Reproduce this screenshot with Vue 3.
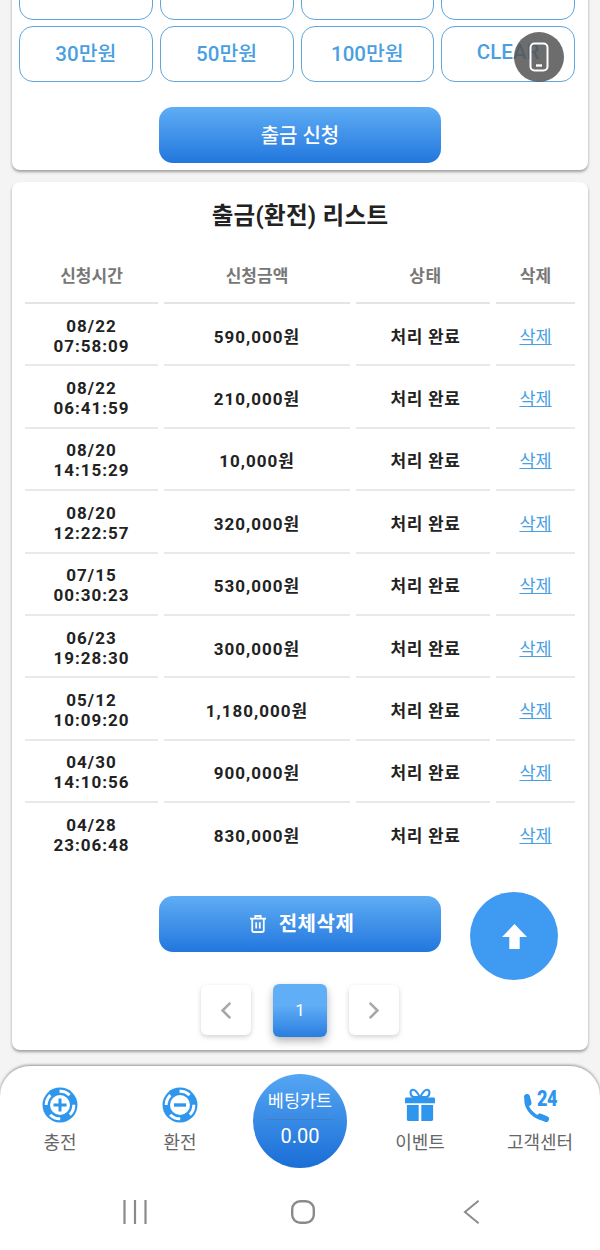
<template>
  <div class="page">
    <!-- amount picker, scrolled partly off the top -->
    <section class="card pick-card">
      <div class="amount-grid">
        <button v-for="a in amounts" :key="a.id" class="amount-btn">{{ a.label }}</button>
      </div>
      <button class="main-btn submit-btn">출금 신청</button>
    </section>

    <!-- withdrawal list -->
    <section class="card list-card">
      <h2 class="list-title">출금(환전) 리스트</h2>
      <table class="list-table">
        <colgroup>
          <col class="col-time" />
          <col class="col-amount" />
          <col class="col-state" />
          <col class="col-del" />
        </colgroup>
        <thead>
          <tr>
            <th>신청시간</th>
            <th>신청금액</th>
            <th class="state-cell">상태</th>
            <th>삭제</th>
          </tr>
        </thead>
        <tbody>
          <tr v-for="row in rows" :key="row.date + row.time">
            <td class="time-cell">{{ row.date }}<br />{{ row.time }}</td>
            <td class="money-cell">{{ row.amount }}원</td>
            <td class="state-cell">처리 완료</td>
            <td><a class="del-link" href="#">삭제</a></td>
          </tr>
        </tbody>
      </table>

      <button class="main-btn clear-btn">
        <svg class="trash" viewBox="0 0 18 20" width="16" height="18" fill="none" stroke="#fff" stroke-width="2">
          <path d="M0 4h18M6 4V1h6v3M2.500 4v13q0 2 2 2h9q2 0 2-2V4M7 8v7M11 8v7" />
        </svg>
        전체삭제
      </button>

      <div class="pager">
        <button class="page-btn">
          <svg viewBox="0 0 14 22" width="12" height="19" fill="none" stroke="#a8a8a8" stroke-width="3"><path d="M12 2 3 11l9 9" /></svg>
        </button>
        <button class="page-btn active">1</button>
        <button class="page-btn">
          <svg viewBox="0 0 14 22" width="12" height="19" fill="none" stroke="#a8a8a8" stroke-width="3"><path d="M2 2l9 9-9 9" /></svg>
        </button>
      </div>
    </section>

    <!-- bottom tab bar + system nav -->
    <footer class="bottom-bar">
      <div class="tabs">
        <div class="tab">
          <svg class="tab-icon" viewBox="0 0 36 36" width="36" height="36">
            <circle cx="18" cy="18" r="17.500" fill="#2f96ee" />
            <circle cx="18" cy="18" r="13.800" fill="none" stroke="#fff" stroke-width="3" stroke-dasharray="11 10.700" transform="rotate(-92 18 18)" />
            <circle cx="18" cy="18" r="10" fill="#fff" />
            <path d="M18 11.500v13M11.500 18h13" stroke="#2f96ee" stroke-width="3" />
          </svg>
          <span>충전</span>
        </div>
        <div class="tab">
          <svg class="tab-icon" viewBox="0 0 36 36" width="36" height="36">
            <circle cx="18" cy="18" r="17.500" fill="#2f96ee" />
            <circle cx="18" cy="18" r="13.800" fill="none" stroke="#fff" stroke-width="3" stroke-dasharray="11 10.700" transform="rotate(-92 18 18)" />
            <circle cx="18" cy="18" r="10" fill="#fff" />
            <path d="M12 18h12" stroke="#2f96ee" stroke-width="3.400" />
          </svg>
          <span>환전</span>
        </div>
        <div class="bet-cart">
          <span class="bet-label">베팅카트</span>
          <i class="bet-line"></i>
          <span class="bet-value">0.00</span>
        </div>
        <div class="tab">
          <svg class="tab-icon" viewBox="0 0 32 36" width="30" height="36" fill="#2f96ee">
            <path d="M0 11.500q0-1.500 1.500-1.500h29q1.500 0 1.500 1.500V16H0zM2 18h12.600v17H3.500Q2 35 2 33.500zM17.400 18H30v15.500q0 1.500-1.500 1.500H17.400z" />
            <path d="M16 10C13 4 10 1 7.500 2 5 3 5.500 8.500 9 9.500h7ZM16 10c3-6 6-9 8.500-8 2.500 1 2 6.500-1.500 7.500h-7Z" fill="none" stroke="#2f96ee" stroke-width="2.200" />
          </svg>
          <span>이벤트</span>
        </div>
        <div class="tab">
          <div class="call-icon">
            <svg viewBox="0 0 27 28" width="27" height="28" fill="none" stroke="#2f96ee" stroke-linecap="round">
              <path d="M4 6c0 9 8 18 19 19" stroke-width="3.400" />
              <path d="M5 3l1.500 6M18 22.500l6 2.500" stroke-width="6" />
            </svg>
            <b class="call-24">24</b>
          </div>
          <span>고객센터</span>
        </div>
      </div>

      <div class="sys-nav">
        <svg viewBox="0 0 24 24" width="24" height="24" stroke="#8a8a8a" stroke-width="2.200" fill="none"><path d="M1.500 0v24M12 0v24M22.500 0v24" /></svg>
        <svg viewBox="0 0 24 24" width="24" height="24" stroke="#8a8a8a" stroke-width="2.400" fill="none"><rect x="1.200" y="1.200" width="21.600" height="21.600" rx="8" /></svg>
        <svg viewBox="0 0 18 26" width="17" height="26" stroke="#8a8a8a" stroke-width="2" fill="none"><path d="M16.500 1 2 13l14.500 12" /></svg>
      </div>
    </footer>

    <!-- floating buttons -->
    <button class="fab-top">
      <svg viewBox="0 0 24 24" width="25" height="25" fill="#fff"><path d="M12 0 0 12.500h7V24h10V12.500h7z" /></svg>
    </button>
    <div class="fab-phone">
      <svg viewBox="0 0 20 30" width="20" height="30" fill="none" stroke="#fff" stroke-width="2">
        <rect x="1.500" y="1.500" width="17" height="27" rx="4" />
        <path d="M7 23.500h6" stroke-width="2.400" />
      </svg>
    </div>
  </div>
</template>

<script setup>
// top row sits above the fold, its labels are out of view
const amounts = [
  { id: 1, label: '' },
  { id: 2, label: '' },
  { id: 3, label: '' },
  { id: 4, label: '' },
  { id: 5, label: '30만원' },
  { id: 6, label: '50만원' },
  { id: 7, label: '100만원' },
  { id: 8, label: 'CLEAR' }
]

const rows = [
  { date: '08/22', time: '07:58:09', amount: '590,000' },
  { date: '08/22', time: '06:41:59', amount: '210,000' },
  { date: '08/20', time: '14:15:29', amount: '10,000' },
  { date: '08/20', time: '12:22:57', amount: '320,000' },
  { date: '07/15', time: '00:30:23', amount: '530,000' },
  { date: '06/23', time: '19:28:30', amount: '300,000' },
  { date: '05/12', time: '10:09:20', amount: '1,180,000' },
  { date: '04/30', time: '14:10:56', amount: '900,000' },
  { date: '04/28', time: '23:06:48', amount: '830,000' }
]
</script>

<style>
html, body { background: #f4f4f4; }
</style>

<style scoped>
.page {
  position: relative;
  width: 600px;
  height: 1250px;
  overflow: hidden;
  background: #f4f4f4;
  font-family: Roboto, "Noto Sans CJK KR", sans-serif;
  display: flex;
  flex-direction: column;
}

button { font-family: inherit; cursor: pointer; }

.card {
  flex-shrink: 0;
  margin: 0 12px;
  background: #fff;
  border-radius: 8px;
  box-shadow: 0 2px 3px rgba(0, 0, 0, 0.35);
}

/* amount picker */
.pick-card {
  margin-top: -50px;
  padding: 14px 13px 7px 7px;
  display: flex;
  flex-direction: column;
  align-items: center;
}
.amount-grid {
  width: 556px;
  display: grid;
  grid-template-columns: repeat(4, 1fr);
  gap: 6px 7px;
}
.amount-btn {
  height: 56px;
  background: #fff;
  border: 1px solid #5ea6dc;
  border-radius: 14px;
  color: #4a9fe3;
  font-size: 20.500px;
  font-weight: 500;
  padding: 0 0 4px;
}

.main-btn {
  display: flex;
  align-items: center;
  justify-content: center;
  width: 282px;
  height: 56px;
  border: none;
  border-radius: 14px;
  background: linear-gradient(180deg, #5fadf5, #2277dd);
  color: #fff;
  font-size: 20px;
  font-weight: 500;
}
.submit-btn { margin: 25px 0 0 6px; padding-bottom: 3px; }

/* list */
.list-card {
  margin-top: 12px;
  height: 868px;
  padding: 0 7px;
  display: flex;
  flex-direction: column;
  align-items: center;
}
.list-title {
  margin: 19px 0 0;
  height: 30px;
  line-height: 30px;
  font-size: 23.500px;
  font-weight: 700;
  color: #222;
  letter-spacing: 0.3px;
}
.list-table {
  width: 562px;
  margin-top: 15px;
  border-collapse: separate;
  border-spacing: 6px 0;
  table-layout: fixed;
}
.col-time { width: 133px; }
.col-amount { width: 186px; }
.col-state { width: 134px; }
.col-del { width: 79px; }

.list-table th {
  height: 56px;
  padding: 0;
  border-bottom: 2px solid #e4e4e4;
  color: #777;
  font-size: 17px;
  font-weight: 700;
}
.list-table td {
  height: 58.400px;
  padding: 2px 0 0;
  border-bottom: 2px solid #e9e9e9;
  text-align: center;
  color: #222;
  font-size: 17px;
  font-weight: 700;
  letter-spacing: 1px;
}
.list-table tbody tr:last-child td { border-bottom-color: transparent; }
.list-table .time-cell { height: 57.400px; padding-top: 3px; line-height: 20px; }
.list-table .state-cell { padding-left: 5px; letter-spacing: 0.6px; }
.del-link {
  color: #4a9fe3;
  font-weight: 400;
  font-size: 17.500px;
  letter-spacing: 0;
  text-decoration: underline;
}

.clear-btn { margin-top: 30px; padding: 0 0 3px 4px; font-weight: 700; letter-spacing: 0.5px; gap: 13px; }
.trash { flex-shrink: 0; margin-top: 3px; }

.pager {
  display: flex;
  align-items: center;
  gap: 22px;
  margin-top: 32px;
}
.page-btn {
  display: flex;
  align-items: center;
  justify-content: center;
  width: 50px;
  height: 50px;
  padding: 0;
  border: none;
  border-radius: 6px;
  background: #fff;
  box-shadow: 0 2px 5px rgba(0, 0, 0, 0.18);
}
.page-btn.active {
  width: 54px;
  height: 53px;
  background: linear-gradient(180deg, #60aef6 40%, #2a7de0);
  color: #fff;
  font-size: 17px;
  box-shadow: 0 4px 8px rgba(0, 0, 0, 0.3);
}

/* bottom bar */
.bottom-bar {
  flex: 1;
  margin-top: 16px;
  background: #fff;
  border-radius: 30px 30px 0 0;
  box-shadow: 0 -1px 3px rgba(0, 0, 0, 0.4);
}
.tabs {
  height: 112px;
  display: grid;
  grid-template-columns: repeat(5, 120px);
  align-items: start;
}
.tab {
  display: flex;
  flex-direction: column;
  align-items: center;
  padding-top: 21px;
  color: #666;
  font-size: 18px;
}
.tab span { margin-top: 7px; line-height: 26px; }
.tab-icon { display: block; height: 36px; }
.call-icon {
  position: relative;
  width: 48px;
  height: 36px;
}
.call-icon svg { position: absolute; left: 6px; top: 7px; }
.call-24 {
  position: absolute;
  left: 21px;
  top: 0;
  color: #2f96ee;
  font-size: 22px;
  line-height: 24px;
  font-weight: 900;
  letter-spacing: -0.5px;
  transform: scaleX(0.82);
  transform-origin: left;
}
.bet-cart {
  justify-self: center;
  width: 94px;
  height: 94px;
  margin-top: 8px;
  border-radius: 50%;
  background: linear-gradient(180deg, #55a6f3, #1a6ed6);
  color: #fff;
  display: flex;
  flex-direction: column;
  align-items: center;
}
.bet-label { margin-top: 16px; font-size: 17.500px; line-height: 22px; }
.bet-line {
  width: 68px;
  height: 1px;
  margin-top: 7px;
  background: rgba(90, 110, 140, 0.35);
}
.bet-value { margin-top: 3px; font-size: 20px; line-height: 26px; }

.sys-nav {
  height: 68px;
  display: grid;
  grid-template-columns: repeat(3, 168px);
  justify-items: center;
  align-items: center;
  padding: 0 0 6px 51px;
}

/* floating */
.fab-top {
  position: absolute;
  left: 470px;
  top: 892px;
  width: 88px;
  height: 88px;
  padding: 0;
  border: none;
  border-radius: 50%;
  background: #3f9bf2;
  display: flex;
  align-items: center;
  justify-content: center;
}
.fab-phone {
  position: absolute;
  left: 514px;
  top: 32px;
  width: 50px;
  height: 50px;
  border-radius: 50%;
  background: rgba(85, 85, 85, 0.86);
  display: flex;
  align-items: center;
  justify-content: center;
}
</style>
